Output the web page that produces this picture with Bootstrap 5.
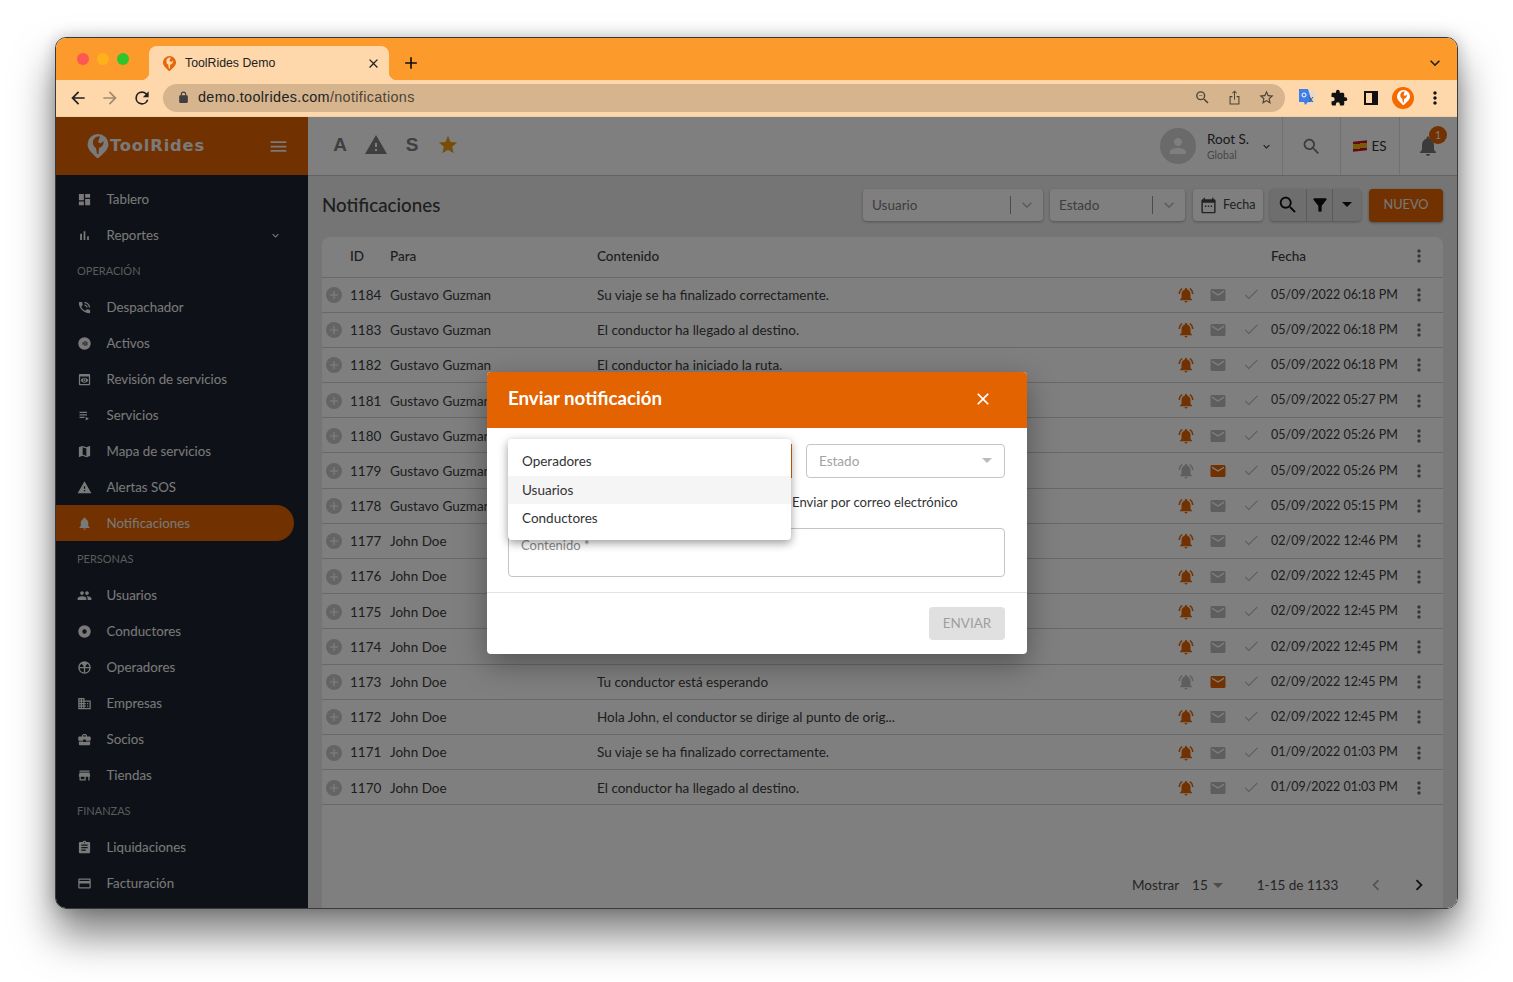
<!DOCTYPE html>
<html lang="es">
<head>
  <meta charset="UTF-8">
  <title>ToolRides Demo</title>
  <link href="https://cdn.jsdelivr.net/npm/bootstrap@5.3.3/dist/css/bootstrap.min.css" rel="stylesheet">
  <style>
    html, body { height: 100%; }
    body {
      background: #fff;
      font-family: "Lato", "Noto Sans", sans-serif;
      font-size: 13.5px;
      color: #3f3f3f;
      overflow: hidden;
    }
    .ic { width: 1em; height: 1em; fill: currentColor; flex: none; display: block; }
    .mac-window {
      margin: 37px 0 0 55px;
      width: 1403px;
      height: 872px;
      border: 1px solid #3a3a3a;
      border-radius: 11px;
      overflow: hidden;
      box-shadow: 0 26px 42px rgba(0,0,0,.5), 0 0 16px rgba(0,0,0,.22);
    }
    .mac-frame { height: 100%; }

    /* browser chrome */
    .tab-strip { height: 42px; background: #fd9a2c; padding-left: 93px; padding-top: 8px; padding-right: 12px; }
    .lights { position: absolute; left: 21px; top: 15px; gap: 8px; }
    .lights i { width: 12px; height: 12px; border-radius: 50%; display: block; }
    .chrome-tab {
      width: 240px; height: 34px; background: #fed8ab; border-radius: 8px 8px 0 0;
      padding: 0 8px 0 13px; font-size: 12.3px; color: #222; position: relative;
      font-family: "Liberation Sans", sans-serif;
    }
    .chrome-tab::before, .chrome-tab::after { content: ""; position: absolute; bottom: 0; width: 8px; height: 8px; }
    .chrome-tab::before { left: -8px; background: radial-gradient(circle at 0 0, transparent 8px, #fed8ab 8.5px); }
    .chrome-tab::after { right: -8px; background: radial-gradient(circle at 100% 0, transparent 8px, #fed8ab 8.5px); }
    .tool-strip { height: 37px; background: #fed8ab; padding: 0 0 1px 12px; border-bottom: 1px solid #f0d0a8; color: #222; }
    .omnibox {
      height: 28px; background: #d5b48e; border-radius: 14px; width: 1122px; margin-left: 11px;
      padding: 0 10px 0 14px; font-family: "Liberation Sans", sans-serif; font-size: 14.4px; color: #222; letter-spacing: .35px;
    }
    .omnibox .url-rest { color: #4d4336; }
    .ext-cell { width: 32px; }

    /* application */
    .app-area { height: 791px; position: relative; overflow: hidden; }
    .app-shade { position: absolute; inset: 0; background: rgba(0,0,0,.5); }
    .side-panel { width: 252px; background: #1c222e; color: #f2f2f2; flex: none; font-size: 13.3px; }
    .side-brand { height: 58px; background: #e36300; padding: 0 19px 0 30px; color: #f4f4f4; }
    .brand-word { font-family: "DejaVu Sans", sans-serif; font-weight: 700; font-size: 16.3px; letter-spacing: .85px; }
    .side-nav { padding-top: 6px; }
    .side-item { height: 36px; padding: 1px 0 0 21px; width: 238px; color: #f2f2f2; text-decoration: none; gap: 14.5px; }
    .side-item .ic { font-size: 15px; }
    .side-item.is-on { background: #e36300; border-radius: 0 18px 18px 0; }
    .side-label { height: 36px; padding-left: 21px; font-size: 11px; color: #b5b5b5; }
    .main-pane { background: #ebebeb; min-width: 0; }
    .top-bar { height: 59px; background: #fff; border-bottom: 1px solid #c8c8c8; padding-left: 14px; color: #7f7f7f; }
    .quick-item { width: 36px; font-family: "Liberation Sans", sans-serif; font-weight: 700; font-size: 19px; padding-bottom: 2px; }
    .bar-cell { height: 58px; border-left: 1px solid #e3e3e3; }
    .avatar-dot { width: 36px; height: 36px; border-radius: 50%; background: #d4d4d4; color: #fff; font-size: 24px; }
    .user-name { font-size: 13.5px; line-height: 16px; color: #333; }
    .user-role { font-size: 10.5px; line-height: 14px; color: #8f8f8f; margin-top: 1px; }
    .flag-es { width: 14px; height: 10px; background: linear-gradient(#c8102e 25%, #f6b511 25% 75%, #c8102e 75%); display: block; transform: skewY(-6deg); }
    .bell-badge {
      position: absolute; left: 29px; top: 9px; width: 18px; height: 18px; border-radius: 50%;
      background: #e36300; color: #f4f4f4; font-size: 10.5px; line-height: 18px; text-align: center;
    }
    .page-body { padding: 13px 14px 0 14px; }
    .page-head { height: 32px; margin-bottom: 16px; }
    .page-title { font-size: 18.8px; font-weight: 500; color: #3c3c3c; margin: 0; }
    .filter-box {
      height: 32px; background: #fff; border-radius: 4px; box-shadow: 0 1px 3px rgba(0,0,0,.3);
      padding-left: 9px; color: #7c7c7c;
    }
    .filter-arrow { margin-left: auto; height: 18px; width: 33px; border-left: 1px solid #999; color: #bbb; font-size: 20px; }
    .action-group { height: 32px; background: #dcdcdc; border-radius: 4px; box-shadow: 0 1px 3px rgba(0,0,0,.3); overflow: hidden; color: #111; }
    .action-group > div { height: 32px; border-left: 1px solid #b5b5b5; }
    .action-group > div:first-child { border-left: 0; }
    .btn.btn-new {
      width: 74px; height: 33px; padding: 0; background: #e36300; border: 0; border-radius: 4px; color: #f0f0f0;
      font-size: 12.8px; box-shadow: 0 1px 3px rgba(0,0,0,.35);
    }
    .list-card { border: 0; border-radius: 8px 8px 0 0; height: 671px; background: #fff; }
    .notif-table { table-layout: fixed; width: 1121px; margin: 0; --bs-table-bg: transparent; color: #3c3c3c; }
    .notif-table > thead > tr > th {
      height: 40px; padding: 0 0 2px; font-weight: 500; font-size: 13.5px; color: #3c3c3c;
      border-bottom: 1px solid #d0d0d0; vertical-align: middle;
    }
    .notif-table > tbody > tr > td {
      height: 35.2px; padding: 1px 0 0; border-bottom: 1px solid #d0d0d0; vertical-align: middle;
      white-space: nowrap; overflow: hidden; color: #3c3c3c;
    }
    .notif-table > tbody > tr > td.date-cell { font-size: 12.5px; }
    .row-plus { width: 16px; height: 16px; border-radius: 50%; background: #c8c8c8; color: #fff; font-size: 14px; margin-left: 4px; }
    .st-ic { font-size: 18px; margin-left: 7px; }
    .st-on { color: #e36300; }
    .st-off { color: #bdbdbd; }
    .st-soft { color: #b4b4b4; }
    .dots-ic { font-size: 20px; color: #6d6d6d; margin-left: 4px; }
    .pager-row { height: 46px; margin-top: auto; color: #4a4a4a; padding-left: 810px; }
    .pager-size { margin-left: 13px; }
    .pager-caret { margin-left: 5px; width: 0; height: 0; border-left: 5px solid transparent; border-right: 5px solid transparent; border-top: 5px solid #999; }

    /* modal */
    .notify-modal {
      position: absolute; left: 431px; top: 255px; width: 540px; height: 282px; background: #fff;
      border-radius: 4px; box-shadow: 0 10px 30px rgba(0,0,0,.35); color: #333;
    }
    .notify-head { height: 56px; background: #e36300; border-radius: 4px 4px 0 0; padding: 0 34px 3px 21px; color: #fff; }
    .notify-head h5 { font-size: 18.7px; font-weight: 700; margin: 0; font-family: "Lato", sans-serif; }
    .notify-head .ic { font-size: 20px; }
    .notify-body { padding: 16px 22px 15px 21px; position: relative; height: 165px; border-bottom: 1px solid #e2e2e2; }
    .select-one { width: 284px; height: 34px; border-right: 1px solid #e36300; }
    .select-two { width: 199px; height: 34px; margin-left: 14px; border: 1px solid #c4c4c4; border-radius: 4px; padding: 0 12px; color: #a3a3a3; }
    .caret-down { width: 0; height: 0; border-left: 5px solid transparent; border-right: 5px solid transparent; border-top: 5px solid #bbb; margin-bottom: 2px; }
    .mail-check { height: 50px; margin-left: 284px; color: #333; font-size: 13.1px; }
    .text-field { height: 49px; border: 1px solid #c4c4c4; border-radius: 4px; padding: 7px 12px; color: #8b8b8b; font-size: 13px; }
    .choice-menu {
      position: absolute; left: 21px; top: 11px; width: 283px; height: 101px; background: #fff; border-radius: 4px;
      box-shadow: 0 3px 10px rgba(0,0,0,.4); padding: 8px 0; border: 0; display: block; z-index: 3; margin: 0;
    }
    .choice-menu .dropdown-item { height: 28.5px; padding: 0 14px; font-size: 13.5px; color: #333; display: flex; align-items: center; }
    .choice-menu .dropdown-item.is-hover { background: #f5f5f5; }
    .notify-foot { height: 60px; padding: 14px 22px; }
    .btn.btn-send { width: 76px; height: 33px; padding: 0; background: #e0e0e0; border: 0; color: #9e9e9e; font-size: 13.5px; border-radius: 4px; opacity: 1; }
  </style>
</head>
<body>

  <svg width="0" height="0" class="position-absolute">
    <defs>
      <symbol id="i-dashboard" viewBox="0 0 24 24"><path d="M3 13h8V3H3v10zm0 8h8v-6H3v6zm10 0h8V11h-8v10zm0-18v6h8V3h-8z"/></symbol>
      <symbol id="i-bars" viewBox="0 0 24 24"><path d="M5 9.2h3V19H5zM10.6 5h2.8v14h-2.8zm5.6 8H19v6h-2.8z"/></symbol>
      <symbol id="i-phone" viewBox="0 0 24 24"><path d="M20 15.5c-1.25 0-2.45-.2-3.57-.57-.35-.11-.74-.03-1.02.24l-2.2 2.2c-2.83-1.44-5.15-3.75-6.59-6.59l2.2-2.21c.28-.26.36-.65.25-1C8.7 6.45 8.5 5.25 8.5 4c0-.55-.45-1-1-1H4c-.55 0-1 .45-1 1 0 9.39 7.61 17 17 17 .55 0 1-.45 1-1v-3.5c0-.55-.45-1-1-1zM19 12h2c0-4.97-4.03-9-9-9v2c3.87 0 7 3.13 7 7zm-4 0h2c0-2.76-2.24-5-5-5v2c1.66 0 3 1.34 3 3z"/></symbol>
      <symbol id="i-active" viewBox="0 0 24 24"><path fill-rule="evenodd" d="M12 2a10 10 0 1 0 0 20 10 10 0 0 0 0-20zM9 10h1.500v4H9zm3-2h1.500v8H12zm3 1h1.500v6H15z"/></symbol>
      <symbol id="i-preview" viewBox="0 0 24 24"><path d="M19 3H5c-1.110 0-2 .9-2 2v14c0 1.100.89 2 2 2h14c1.100 0 2-.9 2-2V5c0-1.100-.89-2-2-2zm0 16H5V7h14v12zm-5.500-6c0 .83-.67 1.500-1.500 1.500s-1.500-.67-1.500-1.500.67-1.500 1.500-1.500 1.500.67 1.500 1.500zM12 9c-2.730 0-5.060 1.660-6 4 .94 2.340 3.270 4 6 4s5.060-1.660 6-4c-.94-2.340-3.270-4-6-4zm0 6.500c-1.380 0-2.500-1.120-2.500-2.500s1.120-2.500 2.500-2.500 2.500 1.120 2.500 2.500-1.120 2.500-2.500 2.500z"/></symbol>
      <symbol id="i-playlist" viewBox="0 0 24 24"><path d="M4 10h12v2H4zm0-4h12v2H4zm0 8h8v2H4zm10 0v6l5-3z"/></symbol>
      <symbol id="i-map" viewBox="0 0 24 24"><path d="M20.500 3l-.16.03L15 5.100 9 3 3.360 4.900c-.21.07-.36.25-.36.48V20.500c0 .28.22.5.5.5l.16-.03L9 18.900l6 2.100 5.640-1.900c.21-.07.36-.25.36-.48V3.500c0-.28-.22-.5-.5-.5zM15 19l-6-2.110V5l6 2.110V19z"/></symbol>
      <symbol id="i-warning" viewBox="0 0 24 24"><path d="M1 21h22L12 2 1 21zm12-3h-2v-2h2v2zm0-4h-2v-4h2v4z"/></symbol>
      <symbol id="i-bell" viewBox="0 0 24 24"><path d="M12 22c1.100 0 2-.9 2-2h-4c0 1.100.89 2 2 2zm6-6v-5c0-3.070-1.640-5.640-4.500-6.320V4c0-.83-.67-1.500-1.500-1.500s-1.500.67-1.500 1.500v.68C7.630 5.360 6 7.920 6 11v5l-2 2v1h16v-1l-2-2z"/></symbol>
      <symbol id="i-bell-on" viewBox="0 0 24 24"><path d="M7.580 4.080L6.150 2.650C3.750 4.480 2.170 7.300 2.030 10.500h2c.15-2.650 1.510-4.970 3.550-6.420zm12.390 6.420h2c-.15-3.200-1.730-6.020-4.120-7.850l-1.420 1.430c2.020 1.450 3.390 3.770 3.540 6.420zM18 11c0-3.070-1.640-5.640-4.500-6.320V4c0-.83-.67-1.500-1.500-1.500s-1.500.67-1.500 1.500v.68C7.630 5.360 6 7.920 6 11v5l-2 2v1h16v-1l-2-2v-5zm-6 11c.14 0 .27-.01.4-.04.65-.14 1.180-.58 1.440-1.180.1-.24.15-.5.15-.78h-4c.01 1.100.9 2 2.010 2z"/></symbol>
      <symbol id="i-people" viewBox="0 0 24 24"><path d="M16 11c1.660 0 2.990-1.340 2.990-3S17.660 5 16 5c-1.660 0-3 1.340-3 3s1.340 3 3 3zm-8 0c1.660 0 2.990-1.340 2.990-3S9.660 5 8 5C6.340 5 5 6.340 5 8s1.340 3 3 3zm0 2c-2.330 0-7 1.170-7 3.500V19h14v-2.500c0-2.330-4.670-3.500-7-3.500zm8 0c-.29 0-.62.02-.97.05 1.160.84 1.970 1.970 1.970 3.450V19h6v-2.500c0-2.330-4.670-3.500-7-3.500z"/></symbol>
      <symbol id="i-album" viewBox="0 0 24 24"><path fill-rule="evenodd" d="M12 2a10 10 0 1 0 0 20 10 10 0 0 0 0-20zm0 6.500a3.500 3.500 0 1 1 0 7 3.500 3.500 0 0 1 0-7z"/></symbol>
      <symbol id="i-agent" viewBox="0 0 24 24"><path fill-rule="evenodd" d="M12 2a10 10 0 1 0 0 20 10 10 0 0 0 0-20zM4.200 11h6.300l-.6-2.500L7 6a8 8 0 0 0-2.800 5zm9.300 0h6.300A8 8 0 0 0 17 6l-2.900 2.500zM11 13H4.300a8 8 0 0 0 6.700 6.900zm2 0v6.900a8 8 0 0 0 6.700-6.900z"/></symbol>
      <symbol id="i-business" viewBox="0 0 24 24"><path d="M12 7V3H2v18h20V7H12zM6 19H4v-2h2v2zm0-4H4v-2h2v2zm0-4H4V9h2v2zm0-4H4V5h2v2zm4 12H8v-2h2v2zm0-4H8v-2h2v2zm0-4H8V9h2v2zm0-4H8V5h2v2zm10 12h-8v-2h2v-2h-2v-2h2v-2h-2V9h8v10zm-2-8h-2v2h2v-2zm0 4h-2v2h2v-2z"/></symbol>
      <symbol id="i-case" viewBox="0 0 24 24"><path d="M10 16v-1H3.010L3 19c0 1.110.89 2 2 2h14c1.110 0 2-.89 2-2v-4h-7v1h-4zm10-9h-4.010V5l-2-2h-4l-2 2v2H4c-1.100 0-2 .9-2 2v3c0 1.110.89 2 2 2h6v-2h4v2h6c1.100 0 2-.9 2-2V9c0-1.100-.9-2-2-2zm-6 0h-4V5h4v2z"/></symbol>
      <symbol id="i-store" viewBox="0 0 24 24"><path d="M20 4H4v2h16V4zm1 10v-2l-1-5H4l-1 5v2h1v6h10v-6h4v6h2v-6h1zm-9 4H6v-4h6v4z"/></symbol>
      <symbol id="i-clip" viewBox="0 0 24 24"><path d="M19 3h-4.180C14.400 1.840 13.300 1 12 1c-1.300 0-2.400.84-2.820 2H5c-1.100 0-2 .9-2 2v14c0 1.100.9 2 2 2h14c1.100 0 2-.9 2-2V5c0-1.100-.9-2-2-2zm-7 0c.55 0 1 .45 1 1s-.45 1-1 1-1-.45-1-1 .45-1 1-1zm2 14H7v-2h7v2zm3-4H7v-2h10v2zm0-4H7V7h10v2z"/></symbol>
      <symbol id="i-card" viewBox="0 0 24 24"><path d="M20 4H4c-1.110 0-1.990.89-1.990 2L2 18c0 1.110.89 2 2 2h16c1.110 0 2-.89 2-2V6c0-1.110-.89-2-2-2zm0 14H4v-6h16v6zm0-10H4V6h16v2z"/></symbol>
      <symbol id="i-menu" viewBox="0 0 24 24"><path d="M3 18h18v-2H3v2zm0-5h18v-2H3v2zm0-7v2h18V6H3z"/></symbol>
      <symbol id="i-search" viewBox="0 0 24 24"><path d="M15.500 14h-.79l-.28-.27C15.410 12.590 16 11.110 16 9.500 16 5.910 13.090 3 9.500 3S3 5.910 3 9.500 5.910 16 9.500 16c1.610 0 3.090-.59 4.230-1.570l.27.28v.79l5 4.990L20.490 19l-4.990-5zm-6 0C7.010 14 5 11.990 5 9.500S7.010 5 9.500 5 14 7.010 14 9.500 11.990 14 9.500 14z"/></symbol>
      <symbol id="i-filter" viewBox="0 0 24 24"><path d="M4.250 5.610C6.270 8.200 10 13 10 13v6c0 .55.45 1 1 1h2c.55 0 1-.45 1-1v-6s3.720-4.800 5.740-7.390c.51-.66.04-1.610-.79-1.610H5.040c-.83 0-1.300.95-.79 1.610z"/></symbol>
      <symbol id="i-event" viewBox="0 0 24 24"><path d="M20 3h-1V1h-2v2H7V1H5v2H4c-1.100 0-2 .9-2 2v16c0 1.100.9 2 2 2h16c1.100 0 2-.9 2-2V5c0-1.100-.9-2-2-2zm0 18H4V8h16v13zM7 12h2v2H7zm4 0h2v2h-2zm4 0h2v2h-2z"/></symbol>
      <symbol id="i-more" viewBox="0 0 24 24"><path d="M12 8c1.100 0 2-.9 2-2s-.9-2-2-2-2 .9-2 2 .9 2 2 2zm0 2c-1.100 0-2 .9-2 2s.9 2 2 2 2-.9 2-2-.9-2-2-2zm0 6c-1.100 0-2 .9-2 2s.9 2 2 2 2-.9 2-2-.9-2-2-2z"/></symbol>
      <symbol id="i-mail" viewBox="0 0 24 24"><path d="M20 4H4c-1.100 0-1.990.9-1.990 2L2 18c0 1.100.9 2 2 2h16c1.100 0 2-.9 2-2V6c0-1.100-.9-2-2-2zm0 4l-8 5-8-5V6l8 5 8-5v2z"/></symbol>
      <symbol id="i-check" viewBox="0 0 24 24"><path d="M9 17.500L3.800 12.300l.9-.9L9 15.700 20.100 4.600l.9.9z"/></symbol>
      <symbol id="i-down" viewBox="0 0 24 24"><path d="M16.590 8.590L12 13.170 7.410 8.590 6 10l6 6 6-6z"/></symbol>
      <symbol id="i-left" viewBox="0 0 24 24"><path d="M15.410 7.410L14 6l-6 6 6 6 1.410-1.410L10.830 12z"/></symbol>
      <symbol id="i-right" viewBox="0 0 24 24"><path d="M10 6L8.590 7.410 13.170 12l-4.580 4.590L10 18l6-6z"/></symbol>
      <symbol id="i-close" viewBox="0 0 24 24"><path d="M19 6.410L17.590 5 12 10.590 6.410 5 5 6.410 10.590 12 5 17.590 6.410 19 12 13.410 17.590 19 19 17.590 13.410 12z"/></symbol>
      <symbol id="i-person" viewBox="0 0 24 24"><path d="M12 12c2.210 0 4-1.790 4-4s-1.790-4-4-4-4 1.790-4 4 1.790 4 4 4zm0 2c-2.670 0-8 1.340-8 4v2h16v-2c0-2.660-5.330-4-8-4z"/></symbol>
      <symbol id="i-star" viewBox="0 0 24 24"><path d="M12 17.270L18.180 21l-1.640-7.030L22 9.240l-7.190-.61L12 2 9.190 8.630 2 9.240l5.460 4.730L5.820 21z"/></symbol>
      <symbol id="i-plus" viewBox="0 0 24 24"><path d="M19 13h-6v6h-2v-6H5v-2h6V5h2v6h6v2z"/></symbol>
      <symbol id="i-pin" viewBox="0 0 24 24"><path fill-rule="evenodd" d="M12 0a10.500 10.500 0 0 0-10.500 10.500C1.500 16 8 21 11 24h1.500c3-3 10-8 10-13.500A10.500 10.500 0 0 0 12 0zm2 2.500l-2 0c-3.500.5-5.500 3.500-5 7 .3 2 1.500 3.500 3 4.500l1 6 1.500 0 .5-6c3-.8 5-3.500 4.500-7l-3 2.500-2.500-1.500z"/></symbol>
      <symbol id="i-puzzle" viewBox="0 0 24 24"><path d="M20.500 11H19V7c0-1.100-.9-2-2-2h-4V3.500a2.500 2.500 0 0 0-5 0V5H4c-1.100 0-2 .9-2 2v3.800h1.500a2.700 2.700 0 0 1 0 5.400H2V20c0 1.100.9 2 2 2h3.800v-1.500a2.700 2.700 0 0 1 5.400 0V22H17c1.100 0 2-.9 2-2v-4h1.500a2.500 2.500 0 0 0 0-5z"/></symbol>
    </defs>
  </svg>

  <div class="mac-window">
    <div class="mac-frame d-flex flex-column">

      <div class="tab-strip d-flex align-items-start position-relative">
        <div class="lights d-flex">
          <i style="background:#fc5753"></i><i style="background:#fdb21c"></i><i style="background:#2fc52f"></i>
        </div>
        <div class="chrome-tab d-flex align-items-center">
          <svg class="ic" style="font-size:15px;color:#e8650a;margin-right:8px"><use href="#i-pin"/></svg>
          <span class="flex-grow-1">ToolRides Demo</span>
          <svg class="ic" style="font-size:15px"><use href="#i-close"/></svg>
        </div>
        <svg class="ic" style="font-size:20px;margin:7px 0 0 12px;color:#111"><use href="#i-plus"/></svg>
        <svg class="ic ms-auto" style="font-size:20px;margin-top:7px;color:#222"><use href="#i-down"/></svg>
      </div>

      <div class="tool-strip d-flex align-items-center">
        <svg class="ic" style="font-size:20px" viewBox="0 0 24 24"><path d="M20 11H7.830l5.590-5.590L12 4l-8 8 8 8 1.410-1.410L7.830 13H20z"/></svg>
        <svg class="ic" style="font-size:20px;margin-left:12px;color:#a08a70" viewBox="0 0 24 24"><path d="M12 4l-1.410 1.410L16.170 11H4v2h12.170l-5.580 5.590L12 20l8-8z"/></svg>
        <svg class="ic" style="font-size:20px;margin-left:12px" viewBox="0 0 24 24"><path d="M17.650 6.350A7.960 7.960 0 0 0 12 4a8 8 0 1 0 7.730 10h-2.080A6 6 0 1 1 12 6c1.660 0 3.140.69 4.220 1.780L13 11h7V4l-2.350 2.350z"/></svg>
        <div class="omnibox d-flex align-items-center">
          <svg class="ic" style="font-size:13px;color:#3f3f3f;margin-right:8px" viewBox="0 0 24 24"><path d="M18 8h-1V6a5 5 0 0 0-10 0v2H6a2 2 0 0 0-2 2v10c0 1.100.9 2 2 2h12a2 2 0 0 0 2-2V10a2 2 0 0 0-2-2zM9 6a3 3 0 0 1 6 0v2H9V6z"/></svg>
          <span>demo.toolrides.com<span class="url-rest">/notifications</span></span>
          <svg class="ic ms-auto" style="font-size:17px;color:#4c4236" viewBox="0 0 24 24"><path d="M15.500 14h-.79l-.28-.27A6.470 6.470 0 0 0 16 9.500 6.500 6.500 0 1 0 9.500 16c1.610 0 3.090-.59 4.230-1.570l.27.28v.79l5 4.990L20.490 19l-4.990-5zm-6 0a4.500 4.500 0 1 1 0-9 4.500 4.500 0 0 1 0 9zM7 9h5v1H7z"/></svg>
          <svg class="ic" style="font-size:17px;margin-left:15px;color:#4c4236" viewBox="0 0 24 24"><path d="M12 2L8.500 5.500l1 1L11.300 4.700V15h1.400V4.700l1.800 1.800 1-1zM5 10v11c0 .6.400 1 1 1h12c.6 0 1-.4 1-1V10h-4v1.500h2.500v9h-11v-9H9V10z"/></svg>
          <svg class="ic" style="font-size:17px;margin-left:15px;color:#4c4236" viewBox="0 0 24 24"><path d="M22 9.240l-7.190-.62L12 2 9.190 8.630 2 9.240l5.460 4.730L5.820 21 12 17.270 18.180 21l-1.630-7.030L22 9.240zM12 15.400l-3.760 2.270 1-4.280-3.320-2.880 4.380-.38L12 6.100l1.710 4.040 4.380.38-3.320 2.880 1 4.280L12 15.400z"/></svg>
        </div>
        <div class="d-flex align-items-center" style="margin-left:6px">
          <div class="ext-cell d-flex justify-content-center">
            <svg width="16" height="18" viewBox="0 0 16 18"><rect x="7" y="2" width="9" height="14" fill="#e3d9cc"/><path d="M0 0h9l4 13H0z" fill="#3f7ee8"/><path d="M6 16l3-3h-4z" fill="#3f7ee8"/><circle cx="5" cy="6" r="2" fill="none" stroke="#fff" stroke-width="1"/><path d="M10 8l4 5M14 8l-4 5" stroke="#555" stroke-width="1"/></svg>
          </div>
          <div class="ext-cell d-flex justify-content-center"><svg class="ic" style="font-size:18px;color:#111"><use href="#i-puzzle"/></svg></div>
          <div class="ext-cell d-flex justify-content-center"><svg width="14" height="14" viewBox="0 0 14 14"><rect width="14" height="14" fill="#111"/><rect x="2" y="2" width="6" height="10" fill="#fed8ab"/></svg></div>
          <div class="ext-cell d-flex justify-content-center"><div class="d-flex align-items-center justify-content-center rounded-circle" style="width:22px;height:22px;background:#f56a00"><svg class="ic" style="font-size:15px;color:#fff"><use href="#i-pin"/></svg></div></div>
          <div class="ext-cell d-flex justify-content-center"><svg class="ic" style="font-size:20px;color:#111"><use href="#i-more"/></svg></div>
        </div>
      </div>

      <div class="app-area d-flex">
        <aside class="side-panel d-flex flex-column">
          <div class="side-brand d-flex align-items-center">
            <svg class="ic" style="font-size:24px"><use href="#i-pin"/></svg>
            <span class="brand-word">ToolRides</span>
            <svg class="ic ms-auto" style="font-size:21px"><use href="#i-menu"/></svg>
          </div>
          <nav class="side-nav d-flex flex-column">
            <a class="side-item d-flex align-items-center" href="#"><svg class="ic"><use href="#i-dashboard"/></svg>Tablero</a>
            <a class="side-item d-flex align-items-center" href="#"><svg class="ic"><use href="#i-bars"/></svg>Reportes<svg class="ic ms-auto" style="font-size:13px;margin-right:12px"><use href="#i-down"/></svg></a>
            <div class="side-label d-flex align-items-center">OPERACIÓN</div>
            <a class="side-item d-flex align-items-center" href="#"><svg class="ic"><use href="#i-phone"/></svg>Despachador</a>
            <a class="side-item d-flex align-items-center" href="#"><svg class="ic"><use href="#i-active"/></svg>Activos</a>
            <a class="side-item d-flex align-items-center" href="#"><svg class="ic"><use href="#i-preview"/></svg>Revisión de servicios</a>
            <a class="side-item d-flex align-items-center" href="#"><svg class="ic"><use href="#i-playlist"/></svg>Servicios</a>
            <a class="side-item d-flex align-items-center" href="#"><svg class="ic"><use href="#i-map"/></svg>Mapa de servicios</a>
            <a class="side-item d-flex align-items-center" href="#"><svg class="ic"><use href="#i-warning"/></svg>Alertas SOS</a>
            <a class="side-item is-on d-flex align-items-center" href="#"><svg class="ic"><use href="#i-bell"/></svg>Notificaciones</a>
            <div class="side-label d-flex align-items-center">PERSONAS</div>
            <a class="side-item d-flex align-items-center" href="#"><svg class="ic"><use href="#i-people"/></svg>Usuarios</a>
            <a class="side-item d-flex align-items-center" href="#"><svg class="ic"><use href="#i-album"/></svg>Conductores</a>
            <a class="side-item d-flex align-items-center" href="#"><svg class="ic"><use href="#i-agent"/></svg>Operadores</a>
            <a class="side-item d-flex align-items-center" href="#"><svg class="ic"><use href="#i-business"/></svg>Empresas</a>
            <a class="side-item d-flex align-items-center" href="#"><svg class="ic"><use href="#i-case"/></svg>Socios</a>
            <a class="side-item d-flex align-items-center" href="#"><svg class="ic"><use href="#i-store"/></svg>Tiendas</a>
            <div class="side-label d-flex align-items-center">FINANZAS</div>
            <a class="side-item d-flex align-items-center" href="#"><svg class="ic"><use href="#i-clip"/></svg>Liquidaciones</a>
            <a class="side-item d-flex align-items-center" href="#"><svg class="ic"><use href="#i-card"/></svg>Facturación</a>
          </nav>
        </aside>

        <main class="main-pane flex-grow-1 d-flex flex-column">
          <header class="top-bar d-flex align-items-center">
            <span class="quick-item text-center">A</span>
            <span class="quick-item d-flex justify-content-center"><svg class="ic" style="font-size:24px"><use href="#i-warning"/></svg></span>
            <span class="quick-item text-center">S</span>
            <span class="quick-item d-flex justify-content-center"><svg class="ic" style="font-size:22px;color:#ef9a12"><use href="#i-star"/></svg></span>
            <div class="d-flex align-items-center ms-auto">
              <div class="avatar-dot d-flex align-items-center justify-content-center"><svg class="ic"><use href="#i-person"/></svg></div>
              <div style="margin-left:11px">
                <div class="user-name">Root S.</div>
                <div class="user-role">Global</div>
              </div>
              <svg class="ic" style="font-size:13px;color:#333;margin:0 9px 0 11px"><use href="#i-down"/></svg>
              <div class="bar-cell d-flex align-items-center justify-content-center" style="width:58px"><svg class="ic" style="font-size:21px;color:#777"><use href="#i-search"/></svg></div>
              <div class="bar-cell d-flex align-items-center justify-content-center gap-1" style="width:59px;color:#333"><span class="flag-es"></span>ES</div>
              <div class="bar-cell d-flex align-items-center justify-content-center position-relative" style="width:58px;padding-right:1px"><svg class="ic" style="font-size:24px;color:#777"><use href="#i-bell"/></svg><span class="bell-badge">1</span></div>
            </div>
          </header>

          <div class="page-body">
            <div class="page-head d-flex align-items-center">
              <h1 class="page-title me-auto">Notificaciones</h1>
              <div class="filter-box d-flex align-items-center" style="width:180px">Usuario<span class="filter-arrow d-flex align-items-center justify-content-center"><svg class="ic"><use href="#i-down"/></svg></span></div>
              <div class="filter-box d-flex align-items-center" style="width:135px;margin-left:7px">Estado<span class="filter-arrow d-flex align-items-center justify-content-center"><svg class="ic"><use href="#i-down"/></svg></span></div>
              <div class="filter-box d-flex align-items-center" style="width:70px;margin-left:8px;padding-left:7px;gap:6px;color:#444;font-size:12.6px"><svg class="ic" style="font-size:17px"><use href="#i-event"/></svg>Fecha</div>
              <div class="action-group d-flex" style="margin-left:7px">
                <div class="d-flex align-items-center justify-content-center" style="width:36px"><svg class="ic" style="font-size:22px"><use href="#i-search"/></svg></div>
                <div class="d-flex align-items-center justify-content-center" style="width:26px"><svg class="ic" style="font-size:20px"><use href="#i-filter"/></svg></div>
                <div class="d-flex align-items-center justify-content-center" style="width:29px"><span class="caret-down" style="border-top-color:#111"></span></div>
              </div>
              <button class="btn btn-new" style="margin-left:8px">NUEVO</button>
            </div>

            <div class="card list-card d-flex flex-column">
              <table class="table notif-table">
                <colgroup>
                  <col style="width:28px"><col style="width:40px"><col style="width:207px"><col style="width:573px">
                  <col style="width:32px"><col style="width:33px"><col style="width:36px"><col style="width:134px"><col style="width:38px">
                </colgroup>
                <thead>
                  <tr>
                    <th></th><th>ID</th><th>Para</th><th>Contenido</th><th></th><th></th><th></th><th>Fecha</th>
                    <th><svg class="ic dots-ic"><use href="#i-more"/></svg></th>
                  </tr>
                </thead>
                <tbody id="notifRows"></tbody>
              </table>
              <div class="pager-row d-flex align-items-center">
                <span>Mostrar</span>
                <span class="pager-size">15</span>
                <span class="pager-caret"></span>
                <span style="margin-left:34px">1-15 de 1133</span>
                <svg class="ic" style="font-size:22px;color:#aaa;margin-left:27px"><use href="#i-left"/></svg>
                <svg class="ic" style="font-size:22px;color:#222;margin-left:21px"><use href="#i-right"/></svg>
              </div>
            </div>
          </div>
        </main>

        <div class="app-shade"></div>

        <div class="notify-modal">
          <div class="notify-head d-flex align-items-center justify-content-between">
            <h5>Enviar notificación</h5>
            <svg class="ic"><use href="#i-close"/></svg>
          </div>
          <div class="notify-body">
            <div class="d-flex">
              <div class="select-one"></div>
              <div class="select-two d-flex align-items-center justify-content-between">Estado<span class="caret-down"></span></div>
            </div>
            <div class="mail-check d-flex align-items-center">Enviar por correo electrónico</div>
            <div class="text-field">Contenido *</div>
            <ul class="dropdown-menu choice-menu list-unstyled">
              <li><a class="dropdown-item" href="#">Operadores</a></li>
              <li><a class="dropdown-item is-hover" href="#">Usuarios</a></li>
              <li><a class="dropdown-item" href="#">Conductores</a></li>
            </ul>
          </div>
          <div class="notify-foot d-flex justify-content-end">
            <button class="btn btn-send" disabled>ENVIAR</button>
          </div>
        </div>
      </div>

    </div>
  </div>

  <script>
    const gustavo = "Gustavo Guzman";
    const john = "John Doe";
    const rows = [
      [1184, gustavo, "Su viaje se ha finalizado correctamente.", "05/09/2022 06:18 PM", 0],
      [1183, gustavo, "El conductor ha llegado al destino.", "05/09/2022 06:18 PM", 0],
      [1182, gustavo, "El conductor ha iniciado la ruta.", "05/09/2022 06:18 PM", 0],
      [1181, gustavo, "Tu conductor está esperando", "05/09/2022 05:27 PM", 0],
      [1180, gustavo, "Hola Gustavo, el conductor se dirige al punto de orig...", "05/09/2022 05:26 PM", 0],
      [1179, gustavo, "Tu conductor está esperando", "05/09/2022 05:26 PM", 1],
      [1178, gustavo, "Su viaje se ha finalizado correctamente.", "05/09/2022 05:15 PM", 0],
      [1177, john, "Su viaje se ha finalizado correctamente.", "02/09/2022 12:46 PM", 0],
      [1176, john, "El conductor ha llegado al destino.", "02/09/2022 12:45 PM", 0],
      [1175, john, "El conductor ha iniciado la ruta.", "02/09/2022 12:45 PM", 0],
      [1174, john, "Tu conductor está esperando", "02/09/2022 12:45 PM", 0],
      [1173, john, "Tu conductor está esperando", "02/09/2022 12:45 PM", 1],
      [1172, john, "Hola John, el conductor se dirige al punto de orig...", "02/09/2022 12:45 PM", 0],
      [1171, john, "Su viaje se ha finalizado correctamente.", "01/09/2022 01:03 PM", 0],
      [1170, john, "El conductor ha llegado al destino.", "01/09/2022 01:03 PM", 0]
    ];
    const use = (id, cls) => `<svg class="ic ${cls}"><use href="#${id}"/></svg>`;
    document.getElementById("notifRows").innerHTML = rows.map(([id, to, text, date, mailed]) => `
      <tr>
        <td><span class="row-plus d-flex align-items-center justify-content-center">${use("i-plus", "")}</span></td>
        <td>${id}</td>
        <td>${to}</td>
        <td>${text}</td>
        <td>${use("i-bell-on", "st-ic " + (mailed ? "st-off" : "st-on"))}</td>
        <td>${use("i-mail", "st-ic " + (mailed ? "st-on" : "st-off"))}</td>
        <td>${use("i-check", "st-ic st-soft")}</td>
        <td class="date-cell">${date}</td>
        <td>${use("i-more", "dots-ic")}</td>
      </tr>`).join("");
  </script>
  <script src="https://cdn.jsdelivr.net/npm/bootstrap@5.3.3/dist/js/bootstrap.bundle.min.js"></script>
</body>
</html>
